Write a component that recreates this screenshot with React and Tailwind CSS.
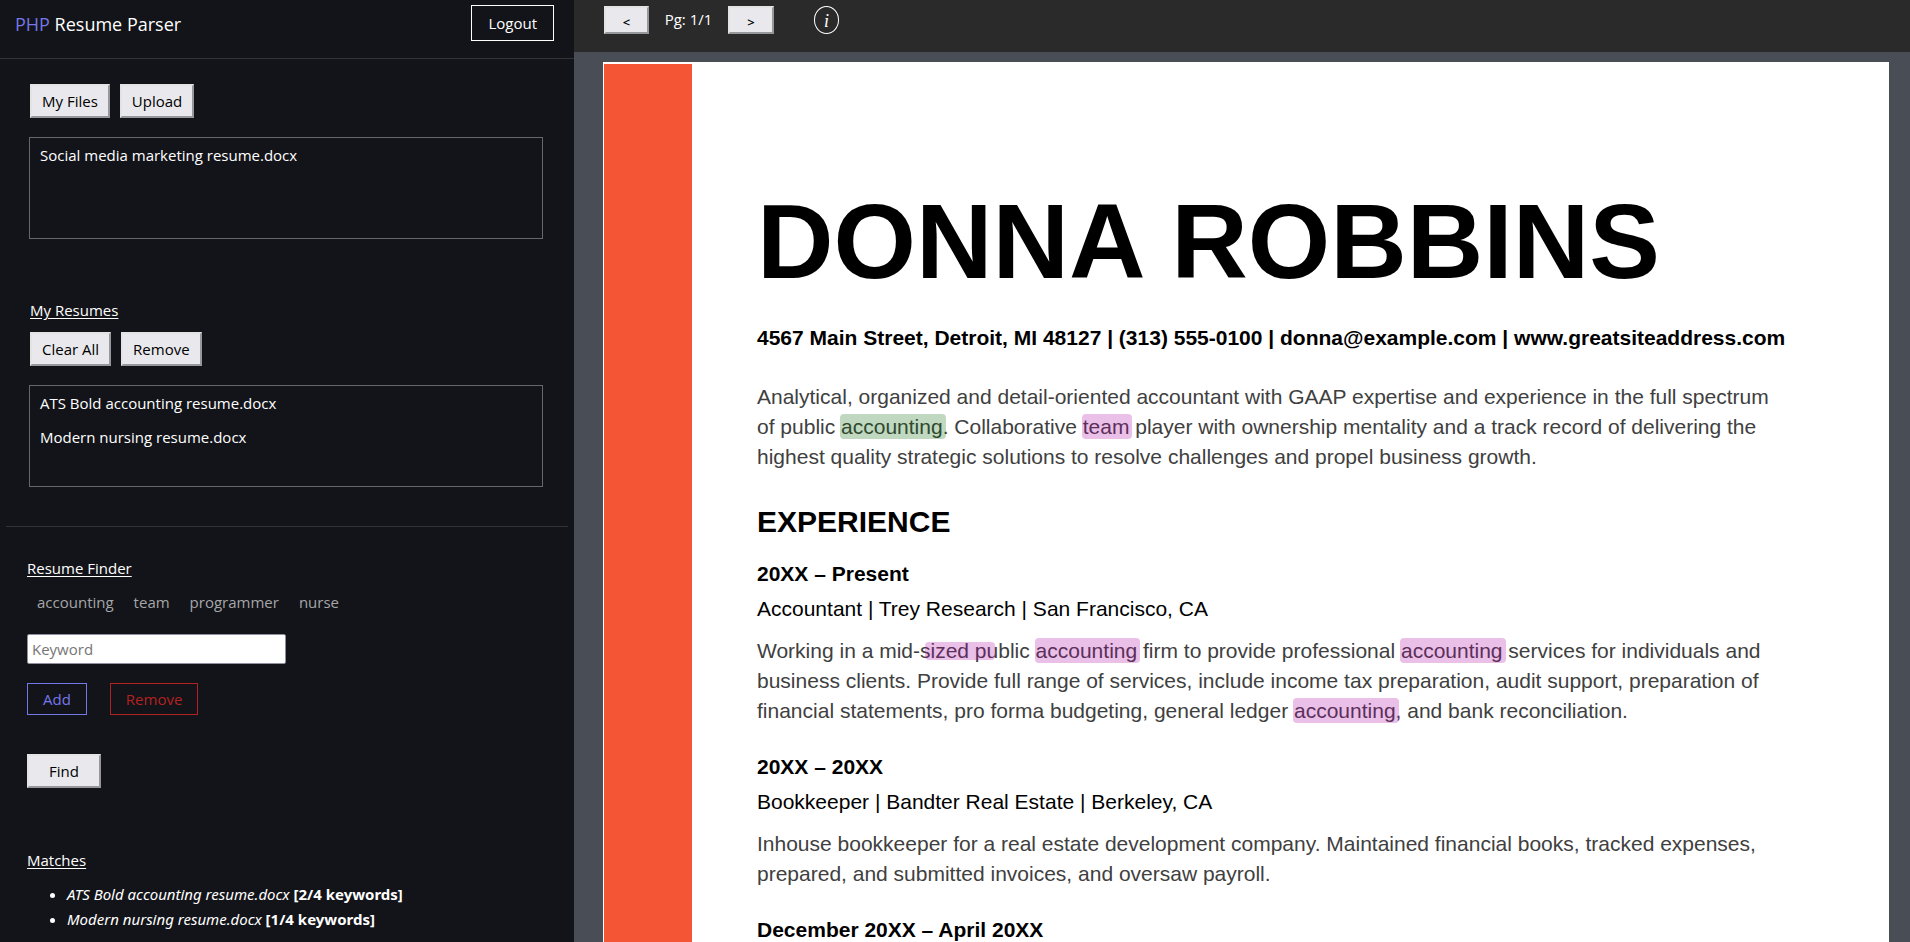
import React from "react";

const raised =
  "border-2 border-t-[#e3e3e3] border-l-[#e3e3e3] border-r-[#95979b] border-b-[#95979b] bg-[#e9e9ed] text-black";

function RaisedButton({ children, className = "h-[34px] px-[10px]", ...rest }) {
  return (
    <button type="button" className={`${raised} ${className}`} {...rest}>
      {children}
    </button>
  );
}

function FileBox({ files, label }) {
  return (
    <ul
      aria-label={label}
      className="mt-[19px] h-[102px] border border-[#66676a] px-[10px]"
    >
      {files.map((file) => (
        <li key={file} className="h-[34px] leading-[34px]">
          {file}
        </li>
      ))}
    </ul>
  );
}

function Highlight({ children, tone = "pink", box = "-inset-y-px -left-px -right-[3px]" }) {
  const color = tone === "green" ? "bg-[#006400]/25" : "bg-[#ac00a4]/25";
  return (
    <span className="relative">
      {children}
      <span className={`absolute rounded-sm ${color} ${box}`} />
    </span>
  );
}

function Line({ children }) {
  return <span className="block whitespace-nowrap">{children}</span>;
}

function Job({ dates, title, children }) {
  return (
    <section className="pb-[23px]">
      <h3 className="leading-[35px] font-bold text-black">{dates}</h3>
      <p className="leading-[35px] text-black">{title}</p>
      <p className="pt-[10px] leading-[30px]">{children}</p>
    </section>
  );
}

function Sidebar() {
  return (
    <aside className="flex w-[574px] shrink-0 flex-col bg-[#131419] text-[15px] leading-5 text-white">
      <header className="flex h-[59px] items-start justify-between border-b border-[#333438] pt-[5px] pr-5 pl-[15px]">
        <h1 className="text-[18px] leading-[38px]">
          <span className="text-[#7377e8]">PHP</span> Resume Parser
        </h1>
        <button type="button" className="h-9 border border-white px-4">
          Logout
        </button>
      </header>

      <section className="pt-[25px] pr-[31px] pl-[29px]">
        <div className="flex gap-[10px] pl-px">
          <RaisedButton>My Files</RaisedButton>
          <RaisedButton>Upload</RaisedButton>
        </div>
        <FileBox label="My Files" files={["Social media marketing resume.docx"]} />
      </section>

      <section className="pt-[61px] pr-[31px] pl-[29px]">
        <h2 className="pl-px underline underline-offset-2">My Resumes</h2>
        <div className="flex gap-[10px] pt-3 pl-px">
          <RaisedButton>Clear All</RaisedButton>
          <RaisedButton>Remove</RaisedButton>
        </div>
        <FileBox
          label="My Resumes"
          files={["ATS Bold accounting resume.docx", "Modern nursing resume.docx"]}
        />
      </section>

      <hr className="mx-[6px] mt-[39px] border-[#333438]" />

      <section className="pl-[27px]">
        <h2 className="pt-[31px] underline underline-offset-2">
          <label htmlFor="keyword">Resume Finder</label>
        </h2>
        <ul className="flex gap-5 pt-[14px] pl-[10px] text-[#a5a6a8]">
          <li>accounting</li>
          <li>team</li>
          <li>programmer</li>
          <li>nurse</li>
        </ul>
        <input
          id="keyword"
          type="text"
          placeholder="Keyword"
          className="mt-[22px] block h-[30px] w-[259px] rounded-xs border border-[#8f8f9d] bg-white px-1 text-black placeholder:text-[#757575]"
        />
        <div className="flex gap-[23px] pt-[19px]">
          <button type="button" className="h-8 border border-[#7377e8] px-[15px] text-[#7377e8]">
            Add
          </button>
          <button type="button" className="h-8 border border-[#b22222] px-[15px] text-[#b22222]">
            Remove
          </button>
        </div>
        <RaisedButton className="mt-[39px] h-[34px] px-5">Find</RaisedButton>
      </section>

      <section className="pt-[62px] pl-[27px]">
        <h2 className="underline underline-offset-2">Matches</h2>
        <ul className="list-disc pt-3 pl-10 font-['Noto_Sans',sans-serif] leading-[25px]">
          <li>
            <em>ATS Bold accounting resume.docx</em> <b>[2/4 keywords]</b>
          </li>
          <li>
            <em>Modern nursing resume.docx</em> <b>[1/4 keywords]</b>
          </li>
        </ul>
      </section>
    </aside>
  );
}

function Viewer() {
  return (
    <main className="flex min-w-0 flex-1 flex-col bg-[#494d56]">
      <div className="flex h-[52px] shrink-0 items-start bg-[#2a2a2a] pt-[6px] pl-[30px] text-[15px] leading-5 text-white">
        <RaisedButton className="h-7 w-[45px] pt-1 text-[13px] leading-5 font-semibold" aria-label="Previous page">
          &lt;
        </RaisedButton>
        <span className="w-[79px] text-center leading-[26px]">Pg: 1/1</span>
        <RaisedButton className="h-7 w-[46px] pt-1 text-[13px] leading-5 font-semibold" aria-label="Next page">
          &gt;
        </RaisedButton>
        <button
          type="button"
          aria-label="Information"
          className="ml-10 h-7 w-[25px] rounded-[50%] border border-white font-['Liberation_Serif',serif] text-lg italic"
        >
          i
        </button>
      </div>

      <article className="mt-[10px] mr-[21px] ml-[29px] flex flex-1 bg-white pt-[2px] font-['Liberation_Sans',Arial,sans-serif] text-[21px] text-[#404040]">
        <div className="ml-px w-[88px] shrink-0 bg-[#f35535]" />
        <div className="pt-[120px] pl-[65px]">
          <h1 className="text-[106px] leading-[114px] font-bold whitespace-nowrap text-black">
            DONNA ROBBINS
          </h1>
          <p className="pt-[25px] leading-[30px] font-bold whitespace-nowrap text-black">
            4567 Main Street, Detroit, MI 48127 | (313) 555-0100 | donna@example.com |
            www.greatsiteaddress.com
          </p>
          <p className="pt-[29px] leading-[30px]">
            <Line>
              Analytical, organized and detail-oriented accountant with GAAP expertise and experience in the full spectrum
            </Line>
            <Line>
              of public <Highlight tone="green">accounting</Highlight>. Collaborative{" "}
              <Highlight>team</Highlight> player with ownership mentality and a track record of delivering the
            </Line>
            <Line>
              highest quality strategic solutions to resolve challenges and propel business growth.
            </Line>
          </p>
          <h2 className="pt-[30px] pb-[14px] text-[30px] leading-[40px] font-bold text-black">
            EXPERIENCE
          </h2>
          <Job dates="20XX – Present" title="Accountant | Trey Research | San Francisco, CA">
            <Line>
              Working in a mid-
              <Highlight box="top-[3px] bottom-[2px] left-[5px] right-[3px]">sized pu</Highlight>
              blic <Highlight>accounting</Highlight> firm to provide professional{" "}
              <Highlight>accounting</Highlight> services for individuals and
            </Line>
            <Line>
              business clients. Provide full range of services, include income tax preparation, audit support, preparation of
            </Line>
            <Line>
              financial statements, pro forma budgeting, general ledger{" "}
              <Highlight>accounting</Highlight>, and bank reconciliation.
            </Line>
          </Job>
          <Job dates="20XX – 20XX" title="Bookkeeper | Bandter Real Estate | Berkeley, CA">
            <Line>
              Inhouse bookkeeper for a real estate development company. Maintained financial books, tracked expenses,
            </Line>
            <Line>prepared, and submitted invoices, and oversaw payroll.</Line>
          </Job>
          <h3 className="leading-[35px] font-bold text-black">December 20XX – April 20XX</h3>
        </div>
      </article>
    </main>
  );
}

export default function App() {
  return (
    <div className="flex h-screen overflow-hidden font-['Open_Sans','Noto_Sans',sans-serif]">
      <Sidebar />
      <Viewer />
    </div>
  );
}
